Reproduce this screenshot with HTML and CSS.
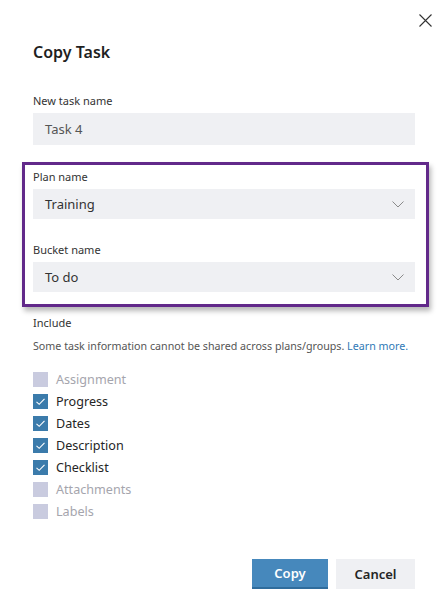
FILE: index.html
```html
<!DOCTYPE html>
<html lang="en">
<head>
<meta charset="utf-8">
<title>Copy Task</title>
<link rel="stylesheet" href="styles.css">
</head>
<body>
<div class="dialog">
  <div class="topbar">
    <button class="close" aria-label="Close">
      <svg width="13" height="13" viewBox="0 0 13 13"><path d="M0.5 0.5 L12.5 12.5 M12.5 0.5 L0.5 12.5" stroke="#333" stroke-width="1.1" fill="none"/></svg>
    </button>
  </div>
  <h1 class="title">Copy Task</h1>

  <div class="field first">
    <div class="label">New task name</div>
    <div class="input">Task 4</div>
  </div>

  <div class="highlight">
    <div class="field">
      <div class="label">Plan name</div>
      <div class="select"><span>Training</span>
        <svg class="chev" width="12" height="7" viewBox="0 0 12 7"><path d="M0.5 0.5 L6 6 L11.5 0.5" stroke="#8a8a8a" stroke-width="1" fill="none"/></svg>
      </div>
    </div>
    <div class="field second">
      <div class="label">Bucket name</div>
      <div class="select"><span>To do</span>
        <svg class="chev" width="12" height="7" viewBox="0 0 12 7"><path d="M0.5 0.5 L6 6 L11.5 0.5" stroke="#8a8a8a" stroke-width="1" fill="none"/></svg>
      </div>
    </div>
  </div>

  <div class="include">Include</div>
  <div class="note">Some task information cannot be shared across plans/groups. <a class="link">Learn more.</a></div>

  <ul class="checks">
    <li class="row disabled"><span class="box"></span>Assignment</li>
    <li class="row"><span class="box on"><svg width="15" height="15" viewBox="0 0 15 15"><path d="M3.5 7.8 L6.2 10.3 L11.5 4.8" stroke="#fff" stroke-width="1.1" fill="none"/></svg></span>Progress</li>
    <li class="row"><span class="box on"><svg width="15" height="15" viewBox="0 0 15 15"><path d="M3.5 7.8 L6.2 10.3 L11.5 4.8" stroke="#fff" stroke-width="1.1" fill="none"/></svg></span>Dates</li>
    <li class="row"><span class="box on"><svg width="15" height="15" viewBox="0 0 15 15"><path d="M3.5 7.8 L6.2 10.3 L11.5 4.8" stroke="#fff" stroke-width="1.1" fill="none"/></svg></span>Description</li>
    <li class="row"><span class="box on"><svg width="15" height="15" viewBox="0 0 15 15"><path d="M3.5 7.8 L6.2 10.3 L11.5 4.8" stroke="#fff" stroke-width="1.1" fill="none"/></svg></span>Checklist</li>
    <li class="row disabled"><span class="box"></span>Attachments</li>
    <li class="row disabled"><span class="box"></span>Labels</li>
  </ul>

  <div class="actions">
    <button class="btn primary">Copy</button>
    <button class="btn secondary">Cancel</button>
  </div>
</div>
</body>
</html>
```
FILE: styles.css
```css
* { box-sizing: border-box; }
html, body { margin: 0; padding: 0; background: #fff; }
body {
  font-family: "Noto Sans", "Open Sans", sans-serif;
  color: #252525;
  width: 444px;
  height: 600px;
  overflow: hidden;
}
.dialog {
  padding: 0 29px 0 33px;
}
.topbar {
  display: flex;
  justify-content: flex-end;
  padding-top: 14px;
  margin-right: -17px;
}
.close {
  width: 13px;
  height: 13px;
  padding: 0;
  border: 0;
  background: none;
  display: block;
}
.close svg { display: block; }
.title {
  margin: 13px 0 0 0;
  font-size: 16px;
  line-height: 24px;
  font-weight: 600;
  color: #1f1f1f;
}
.field.first { margin-top: 29px; }
.label {
  font-size: 11px;
  line-height: 16px;
  color: #333;
}
.input, .select {
  margin-top: 4px;
  background: #eff0f3;
  font-size: 13px;
  color: #444;
  padding-left: 12px;
  display: flex;
  align-items: center;
}
.input { height: 32px; color: #555; }
.select { height: 30px; justify-content: space-between; padding-right: 11px; color: #333; }
.chev { display: block; }
.highlight {
  margin: 17px -14px 0 -11px;
  border: 3px solid #62298a;
  padding: 4px 11px 12px 8px;
  box-shadow: 2px 4px 5px rgba(0,0,0,0.28);
}
.field.second { margin-top: 23px; }
.include {
  margin-top: 8px;
  font-size: 11px;
  line-height: 16px;
  color: #333;
}
.note {
  margin-top: 7px;
  font-size: 10.7px;
  line-height: 16px;
  color: #555;
  white-space: nowrap;
}
.link { color: #2f79b6; }
.checks {
  list-style: none;
  margin: 14px 0 0 0;
  padding: 0;
}
.row {
  height: 22px;
  display: flex;
  align-items: center;
  font-size: 12.6px;
  color: #252525;
}
.row.disabled { color: #a5a5ad; }
.box {
  width: 15px;
  height: 15px;
  margin-right: 8px;
  background: #c9cbdf;
  flex: none;
}
.box.on { background: #3b7bab; }
.box svg { display: block; }
.actions {
  margin-top: 37px;
  display: flex;
  justify-content: flex-end;
  gap: 8px;
}
.btn {
  height: 30px;
  border: 0;
  font-family: inherit;
  font-size: 13px;
  font-weight: 600;
  padding: 0;
}
.primary {
  width: 76px;
  background: #4688bc;
  color: #fff;
  border-bottom: 2px solid #2f6c9c;
}
.secondary {
  width: 79px;
  background: #eff0f3;
  color: #252525;
}
```
